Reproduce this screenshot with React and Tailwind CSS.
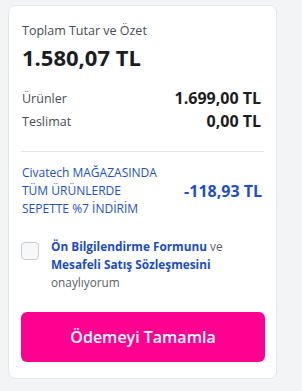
export default function App() {
  return (
    <div className="w-[302px] h-[391px] bg-[#f3f4f6] pt-[5px] pl-[8px]" style={{ fontFamily: '"Open Sans", "Noto Sans", sans-serif' }}>
      <div className="w-[269px] h-[374px] bg-white border border-[#e3e5e8] rounded-[7px] px-[12px] pt-[17px]">
        <div className="px-[1px] text-[12.5px] leading-[16px] text-[#484d57]">Toplam Tutar ve Özet</div>
        <div className="mt-[3px] px-[1px] text-[22px] leading-[30px] font-bold text-[#1b1d22]">1.580,07 TL</div>
        <div className="mt-[14px] flex items-center justify-between pl-[1px] pr-[3px] h-[23px]">
          <span className="text-[12.5px] text-[#484d57] mt-[3px]">Ürünler</span>
          <span className="text-[16px] font-bold text-[#1b1d22]">1.699,00 TL</span>
        </div>
        <div className="flex items-center justify-between pl-[1px] pr-[3px] h-[23px]">
          <span className="text-[12.5px] text-[#484d57] mt-[3px]">Teslimat</span>
          <span className="text-[16px] font-bold text-[#1b1d22]">0,00 TL</span>
        </div>
        <div className="mt-[19px] border-t border-[#e5e7eb]" />
        <div className="mt-[12px] flex items-center justify-between pl-[1px] pr-[2px]">
          <div className="text-[12px] leading-[18px] text-[#1d4fd0] font-medium">
            <div>Civatech MAĞAZASINDA</div>
            <div>TÜM ÜRÜNLERDE</div>
            <div>SEPETTE %7 İNDİRİM</div>
          </div>
          <div className="text-[16px] font-bold text-[#1d4fd0]">-118,93 TL</div>
        </div>
        <div className="mt-[19px] flex gap-[12px]">
          <div className="mt-[5px] w-[18px] h-[18px] rounded-[4px] border border-[#c9ccd2] bg-[#f7f8f9] shrink-0" />
          <div className="text-[11.8px] leading-[18px] text-[#5a5f68]">
            <div><span className="font-bold text-[#1a4cc9]">Ön Bilgilendirme Formunu</span> ve</div>
            <div className="font-bold text-[#1a4cc9]">Mesafeli Satış Sözleşmesini</div>
            <div>onaylıyorum</div>
          </div>
        </div>
        <button className="mt-[21px] w-[244px] h-[50px] rounded-[6px] bg-[#ff0090] text-white text-[16px] font-semibold">
          Ödemeyi Tamamla
        </button>
      </div>
    </div>
  );
}
